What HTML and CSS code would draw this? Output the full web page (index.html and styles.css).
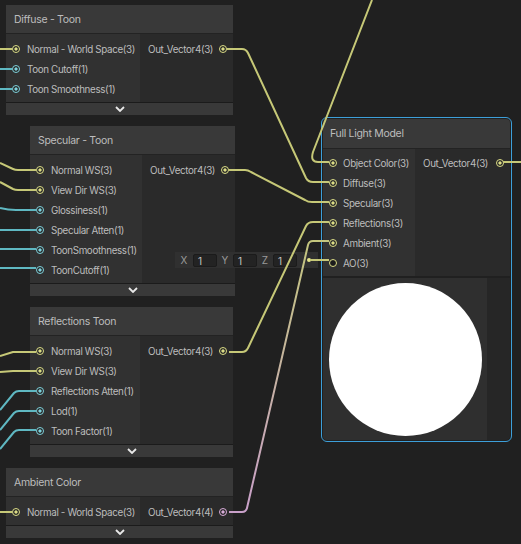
FILE: index.html
```html
<!DOCTYPE html>
<html lang="en">
<head>
    <meta charset="UTF-8">
    <title>Shader Graph</title>
    <link rel="stylesheet" href="styles.css">
</head>
<body>
<div class="canvas">

    <!-- Diffuse - Toon -->
    <div class="node n-diffuse">
        <div class="title">Diffuse - Toon</div>
        <div class="body">
            <div class="inputs">
                <div class="slot"><i class="port y"></i>Normal - World Space(3)</div>
                <div class="slot"><i class="port c"></i>Toon Cutoff(1)</div>
                <div class="slot"><i class="port c"></i>Toon Smoothness(1)</div>
            </div>
            <div class="outputs">
                <div class="slot">Out_Vector4(3)<i class="port y"></i></div>
            </div>
        </div>
        <div class="collapse"><svg width="10" height="6" viewBox="0 0 10 6"><path d="M1 1 L5 5 L9 1" /></svg></div>
    </div>

    <!-- Specular - Toon -->
    <div class="node n-specular">
        <div class="title">Specular - Toon</div>
        <div class="body">
            <div class="inputs">
                <div class="slot"><i class="port y"></i>Normal WS(3)</div>
                <div class="slot"><i class="port y"></i>View Dir WS(3)</div>
                <div class="slot"><i class="port c"></i>Glossiness(1)</div>
                <div class="slot"><i class="port c"></i>Specular Atten(1)</div>
                <div class="slot"><i class="port c"></i>ToonSmoothness(1)</div>
                <div class="slot"><i class="port c"></i>ToonCutoff(1)</div>
            </div>
            <div class="outputs">
                <div class="slot">Out_Vector4(3)<i class="port y"></i></div>
            </div>
        </div>
        <div class="collapse"><svg width="10" height="6" viewBox="0 0 10 6"><path d="M1 1 L5 5 L9 1" /></svg></div>
    </div>

    <!-- Reflections Toon -->
    <div class="node n-reflections">
        <div class="title">Reflections Toon</div>
        <div class="body">
            <div class="inputs">
                <div class="slot"><i class="port y"></i>Normal WS(3)</div>
                <div class="slot"><i class="port y"></i>View Dir WS(3)</div>
                <div class="slot"><i class="port c"></i>Reflections Atten(1)</div>
                <div class="slot"><i class="port c"></i>Lod(1)</div>
                <div class="slot"><i class="port c"></i>Toon Factor(1)</div>
            </div>
            <div class="outputs">
                <div class="slot">Out_Vector4(3)<i class="port y"></i></div>
            </div>
        </div>
        <div class="collapse"><svg width="10" height="6" viewBox="0 0 10 6"><path d="M1 1 L5 5 L9 1" /></svg></div>
    </div>

    <!-- Ambient Color -->
    <div class="node n-ambient">
        <div class="title">Ambient Color</div>
        <div class="body">
            <div class="inputs">
                <div class="slot"><i class="port y"></i>Normal - World Space(3)</div>
            </div>
            <div class="outputs">
                <div class="slot">Out_Vector4(4)<i class="port p"></i></div>
            </div>
        </div>
        <div class="collapse"><svg width="10" height="6" viewBox="0 0 10 6"><path d="M1 1 L5 5 L9 1" /></svg></div>
    </div>

    <!-- Full Light Model (selected) -->
    <div class="node n-full selected">
        <div class="title">Full Light Model</div>
        <div class="body">
            <div class="inputs">
                <div class="slot"><i class="port y"></i>Object Color(3)</div>
                <div class="slot"><i class="port y"></i>Diffuse(3)</div>
                <div class="slot"><i class="port y"></i>Specular(3)</div>
                <div class="slot"><i class="port y"></i>Reflections(3)</div>
                <div class="slot"><i class="port y"></i>Ambient(3)</div>
                <div class="slot"><i class="port y empty"></i>AO(3)</div>
            </div>
            <div class="outputs">
                <div class="slot">Out_Vector4(3)<i class="port y"></i></div>
            </div>
        </div>
        <div class="preview">
            <div class="preview-img"><div class="sphere"></div></div>
            <div class="preview-side"></div>
        </div>
    </div>

    <!-- inline vector3 value for AO -->
    <div class="vec-field">
        <span class="axis">X</span><span class="num">1</span>
        <span class="axis">Y</span><span class="num">1</span>
        <span class="axis">Z</span><span class="num">1</span>
        <span class="dot"></span>
    </div>

    <svg class="wires" width="521" height="544" viewBox="0 0 521 544">
        <defs>
            <linearGradient id="pinkYellow" gradientUnits="userSpaceOnUse" x1="245" y1="512" x2="312" y2="241">
                <stop offset="0" stop-color="#c9a0c9"/>
                <stop offset="1" stop-color="#c4c67e"/>
            </linearGradient>
        </defs>
        <g class="yellow">
            <path d="M0 49 H12"/>
            <path d="M227 49 H242 Q246 49 248 53 L306 178 Q308 182 313 182 H329"/>
            <path d="M372 0 L313 152 Q310 162 318 162 H329"/>
            <path d="M0 163 L13 169 Q15 170 18 170 H36"/>
            <path d="M0 182 L13 189 Q15 190 18 190 H36"/>
            <path d="M229 170 H245 Q248 170 251 172 L305 200 Q308 202 312 202 H329"/>
            <path d="M0 356 L13 352 Q15 352 18 352 H36"/>
            <path d="M0 372 L13 371 H36"/>
            <path d="M229 352 H242 Q246 352 248 348 L306 226 Q308 222 313 222 H329"/>
            <path d="M0 512 H12"/>
            <path d="M310 260 H329"/>
            <path d="M503 162 H521"/>
        </g>
        <g class="cyan">
            <path d="M0 69 H12"/>
            <path d="M0 89 H12"/>
            <path d="M0 208 Q8 210 16 210 H36"/>
            <path d="M0 230 H36"/>
            <path d="M0 249 H36"/>
            <path d="M0 268 H36"/>
            <path d="M0 410 L14 393 Q16 391 19 391 H36"/>
            <path d="M0 430 L14 413 Q16 411 19 411 H36"/>
            <path d="M0 449 L14 432 Q16 430 19 430 H36"/>
        </g>
        <path class="pink" d="M229 512 H242 Q246 512 247 508 L308 245 Q309 241 313 241 H329"/>
    </svg>

</div>
</body>
</html>
```

FILE: styles.css
```css
body{margin: 0; background: #202020; font-family: Inter, "Noto Sans", sans-serif;}
.canvas{position: relative; width: 521px; height: 544px; overflow: hidden; background: #202020;}

/* nodes */
.node{position: absolute; display: flex; flex-direction: column; background: #1b1b1b; color: #bdbdbd;
  font-size: 9.8px; letter-spacing: -0.35px;}
.node .title{height: 28px; line-height: 30px; padding-left: 8px; font-size: 10.5px; letter-spacing: -0.3px; background: #393939; border-bottom: 1px solid #232323;}
.node .body{display: flex;}
.node .inputs{flex: none; overflow: hidden; padding: 5px 0 3px; background: #313131;}
.node .outputs{flex: 1; min-width: 0; padding: 5px 0 3px; background: #2a2a2a;}
.node .slot{display: flex; align-items: center; height: 20px; white-space: nowrap;}
.node .inputs .slot .port{margin: 0 7px 0 6px;}
.node .outputs .slot{justify-content: space-between; padding-left: 8px;}
.node .outputs .slot .port{margin-right: 6px;}
.node .collapse{height: 12px; margin-top: 1px; background: #393939; display: flex; justify-content: center; align-items: center;}
.node .collapse path{fill: none; stroke: #e8e8e8; stroke-width: 1.8;}

.n-diffuse{left: 6px; top: 5px; width: 227px;}
.n-diffuse .inputs{width: 134px;}
.n-specular{left: 30px; top: 126px; width: 205px;}
.n-specular .inputs{width: 112px;}
.n-reflections{left: 30px; top: 307px; width: 203px;}
.n-reflections .inputs{width: 110px;}
.n-ambient{left: 6px; top: 468px; width: 227px;}
.n-ambient .inputs{width: 134px;}

/* selected node */
.n-full{left: 321px; top: 117px; width: 191px; height: 325px; box-sizing: border-box;
  border: 1px solid #3d9fd9; border-radius: 6px; padding: 1px; background: #202020;}
.n-full .title{height: 29px; line-height: 30px; padding-left: 7px; border-radius: 4px 4px 0 0;}
.n-full .inputs{width: 92px; padding: 4px 0 3px;}
.n-full .outputs{padding: 4px 0 3px;}
.n-full .inputs .slot .port{margin-right: 6px;}
.n-full .preview{flex: 1; display: flex; margin-top: 2px; border-radius: 0 0 4px 4px; overflow: hidden;}
.n-full .preview-img{width: 164px; background: #2f2f2f; display: flex; justify-content: center; align-items: center;}
.n-full .preview-side{flex: 1; background: #262626;}
.sphere{width: 153px; height: 153px; border-radius: 50%; background: #ffffff;}

/* ports */
.port{display: block; flex: none; width: 8px; height: 8px; border-radius: 50%; box-sizing: border-box;
  border: 1.5px solid var(--pc); background: radial-gradient(circle, var(--pc) 0 1.3px, #262626 1.9px);}
.port.y{--pc: #dcdd86;}
.port.c{--pc: #7fd2dc;}
.port.p{--pc: #d9acd9;}
.port.empty{background: #1c1c1c;}

/* inline value */
.vec-field{position: absolute; left: 175px; top: 252px; width: 143px; height: 16px; display: flex; align-items: center;
  background: #303030; font-size: 10px; color: #c4c4c4;}
.vec-field .axis{width: 18px; text-align: center; color: #9a9a9a;}
.vec-field .axis:nth-child(3), .vec-field .axis:nth-child(5){width: 16px;}
.vec-field .num{width: 24px; height: 13px; line-height: 13px; box-sizing: border-box; padding-left: 4px;
  background: #232323; border: 1px solid #1b1b1b; border-radius: 2px;}
.vec-field .dot{width: 4px; height: 4px; border-radius: 50%; background: #e4e48a; margin-left: 10px;}

/* edges */
.wires{position: absolute; left: 0; top: 0; pointer-events: none;}
.wires path{fill: none; stroke-width: 2; stroke-linejoin: round;}
.wires .yellow path{stroke: #c6c877;}
.wires .cyan path{stroke: #5fb8c2;}
.wires .pink{stroke: url(#pinkYellow);}
```
